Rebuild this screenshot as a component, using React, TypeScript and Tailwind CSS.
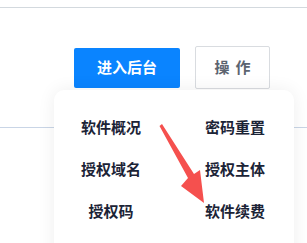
import React from 'react';

const items = [
  ['软件概况', '密码重置'],
  ['授权域名', '授权主体'],
  ['授权码', '软件续费'],
];

const App = () => {
  return (
    <div
      className="relative w-[307px] h-[243px] overflow-hidden bg-white"
      style={{ fontFamily: '"Noto Sans CJK SC", "Noto Sans", sans-serif' }}
    >
      <div className="mt-[7px] h-px bg-[#d3d9de]" />

      <div className="mt-[38px] flex items-center pl-[74px] gap-[15px]">
        <button className="w-[106px] h-[40px] rounded-[2px] bg-[#0a84ff] text-white text-[15px] font-semibold">
          进入后台
        </button>
        <button className="w-[75px] h-[43px] rounded-[2px] border border-[#d9dce0] bg-white text-[#5c6470] text-[15px] font-semibold tracking-[6px] pl-[6px]">
          操作
        </button>
      </div>

      <div className="mt-[38px] h-px bg-[#c9d5e6]" />

      <div className="absolute left-[54px] top-[90px] w-[240px] h-[180px] rounded-[10px] bg-white shadow-[0_0_18px_rgba(0,0,0,0.07)]">
        <div className="pt-[16px] pl-[4px] flex flex-col">
          {items.map((row, i) => (
            <div key={i} className="flex h-[42px] items-center gap-[18px]">
              {row.map((t) => (
                <span
                  key={t}
                  className="w-[106px] text-center text-[15px] font-semibold text-[#1b2336]"
                >
                  {t}
                </span>
              ))}
            </div>
          ))}
        </div>
      </div>

      <svg className="absolute left-0 top-0" width="307" height="243" viewBox="0 0 307 243">
        <polygon
          points="159.5,126 162,124 194,174 200,170 204,203 181,186 188,178"
          fill="#f5504e"
        />
      </svg>
    </div>
  );
};

export default App;
